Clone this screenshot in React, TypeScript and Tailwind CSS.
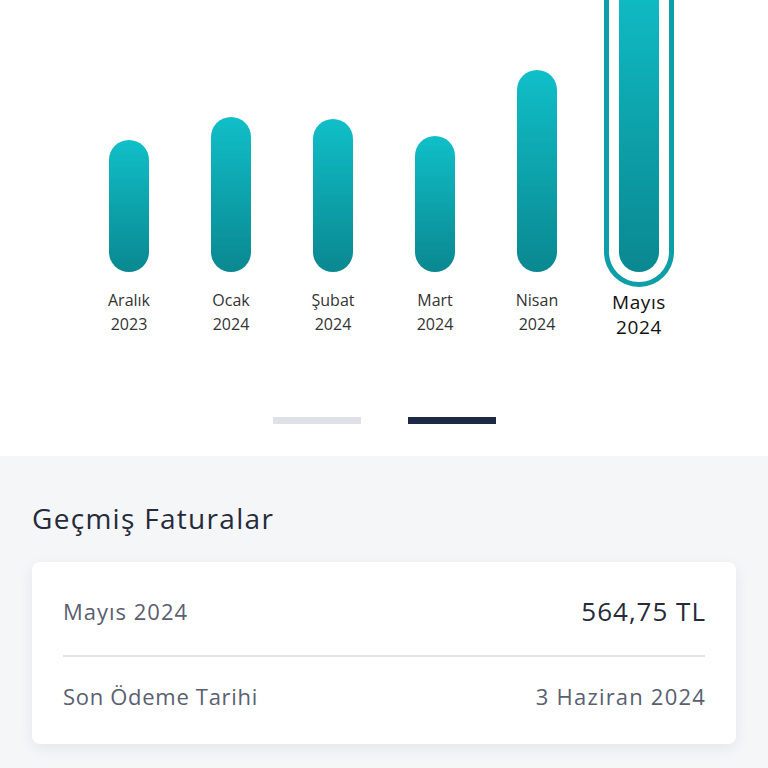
const months = [
  { m: 'Aralık', y: '2023', h: 132 },
  { m: 'Ocak', y: '2024', h: 155 },
  { m: 'Şubat', y: '2024', h: 153 },
  { m: 'Mart', y: '2024', h: 136 },
  { m: 'Nisan', y: '2024', h: 202 },
]

const Bar = ({ h }: { h: number }) => (
  <div
    className="w-[40px] rounded-full bg-gradient-to-b from-[#10bfc8] to-[#0a8891]"
    style={{ height: h }}
  />
)

export default function App() {
  return (
    <div className="w-[768px] h-[768px] overflow-hidden bg-[#f5f6f8] font-['Open_Sans',sans-serif]">
      <div className="bg-white pb-[32px]">
        <div className="flex justify-center">
          {months.map((item) => (
            <div key={item.m} className="w-[102px] flex flex-col items-center">
              <div className="h-[272px] flex items-end justify-center">
                <Bar h={item.h} />
              </div>
              <div className="mt-[16px] text-[16px] leading-[24px] text-[#333] text-center">
                <div>{item.m}</div>
                <div>{item.y}</div>
              </div>
            </div>
          ))}
          <div className="w-[102px] flex flex-col items-center">
            <div className="h-[272px] flex items-end justify-center">
              <div className="-mb-[15px] rounded-full border-[5px] border-[#0e9ea7] p-[10px]">
                <Bar h={300} />
              </div>
            </div>
            <div className="mt-[18px] text-[19px] leading-[25px] tracking-[0.6px] text-[#111] text-center">
              <div>Mayıs</div>
              <div>2024</div>
            </div>
          </div>
        </div>

        <div className="mt-[77px] flex justify-center gap-[47px]">
          <div className="w-[88px] h-[7px] bg-[#dfe1e8]" />
          <div className="w-[88px] h-[7px] bg-[#1e2a45]" />
        </div>
      </div>

      <div className="px-8 pt-[45px]">
        <h2 className="text-[28px] leading-[34px] tracking-[1.3px] text-[#262b3b]">Geçmiş Faturalar</h2>
        <div className="mt-[27px] bg-white rounded-lg shadow-[0_4px_14px_rgba(30,40,60,0.08)] px-[31px] tracking-[1px]">
          <div className="h-[93px] flex items-center justify-between pt-[6px]">
            <span className="text-[22px] text-[#5a6070]">Mayıs 2024</span>
            <span className="text-[26px] text-[#262b3a] -mr-[1px]">564,75 TL</span>
          </div>
          <div className="h-[2px] bg-[#e1e3e8]" />
          <div className="h-[87px] flex items-center justify-between pb-[8px]">
            <span className="text-[22px] text-[#5a6070] tracking-[0.7px]">Son Ödeme Tarihi</span>
            <span className="text-[22px] text-[#5a6070] tracking-[1.2px] -mr-[1px]">3 Haziran 2024</span>
          </div>
        </div>
      </div>
    </div>
  )
}
